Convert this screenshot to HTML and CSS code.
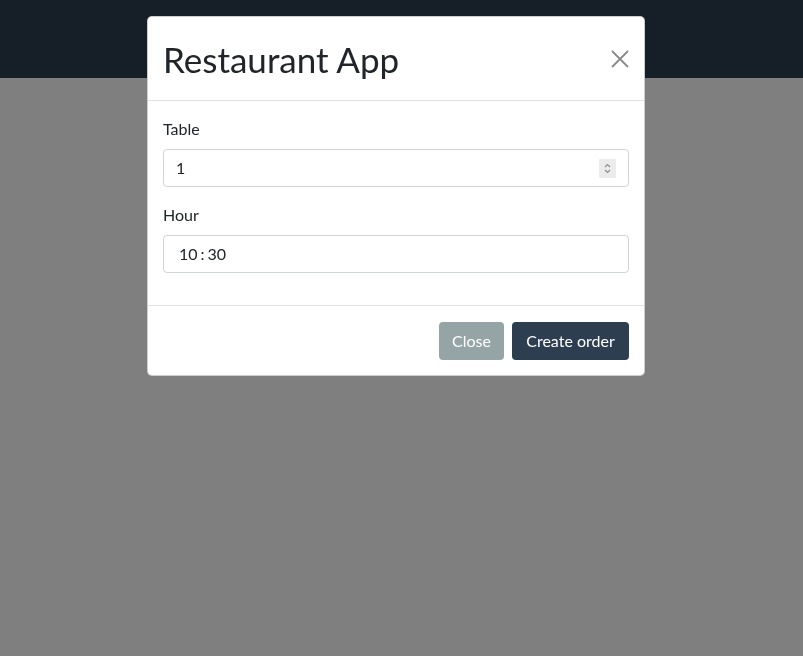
FILE: index.html
```html
<!DOCTYPE html>
<html>
<head>
<meta charset="utf-8">
<link rel="stylesheet" href="styles.css">
</head>
<body>
<div class="navbar"></div>
<div class="backdrop"></div>
<div class="modal">
  <div class="modal-header">
    <h1 class="modal-title">Restaurant App</h1>
    <button class="close" aria-label="Close">
      <svg width="18" height="18" viewBox="0 0 18 18"><path d="M1 1L17 17M17 1L1 17" stroke="#8a8a8a" stroke-width="1.8" fill="none"/></svg>
    </button>
  </div>
  <div class="modal-body">
    <div class="form-group">
      <label class="label">Table</label>
      <div class="input number">
        <span>1</span>
        <span class="spin">
          <svg width="17" height="19" viewBox="0 0 17 19"><path d="M6 8L8.5 5.5L11 8M6 11L8.5 13.5L11 11" stroke="#8c8c8c" stroke-width="1.2" fill="none"/></svg>
        </span>
      </div>
    </div>
    <div class="form-group">
      <label class="label">Hour</label>
      <div class="input time">10<span class="colon">:</span>30</div>
    </div>
  </div>
  <div class="modal-footer">
    <button class="btn btn-secondary">Close</button>
    <button class="btn btn-primary">Create order</button>
  </div>
</div>
</body>
</html>
```
FILE: styles.css
```css
* { box-sizing: border-box; }
html, body { margin: 0; height: 100%; }
body {
  font-family: Lato, "Liberation Sans", sans-serif;
  background: #ffffff;
  color: #212529;
  overflow: hidden;
}
.navbar {
  height: 78px;
  background: #2c3e50;
}
.backdrop {
  position: fixed;
  inset: 0;
  background: rgba(0,0,0,0.5);
}
.modal {
  position: absolute;
  top: 16px;
  left: 147px;
  width: 498px;
  background: #fff;
  border: 1px solid rgba(0,0,0,0.2);
  border-radius: 5px;
}
.modal-header {
  display: flex;
  align-items: center;
  justify-content: space-between;
  padding: 16px 15px 15px 15px;
  height: 84px;
  border-bottom: 1px solid #dee2e6;
}
.modal-title {
  margin: 0;
  font-weight: 400;
  font-size: 35px;
  line-height: 52px;
  color: #212529;
}
.close {
  background: none;
  border: 0;
  padding: 0;
  width: 18px;
  height: 18px;
  display: flex;
}
.modal-body {
  padding: 16px 16px 16px 15px;
}
.form-group {
  margin-bottom: 16px;
}
.label {
  display: block;
  font-size: 16px;
  line-height: 24px;
  margin-bottom: 8px;
  color: #212529;
}
.input {
  display: flex;
  align-items: center;
  width: 466px;
  height: 38px;
  padding: 6px 12px;
  font-size: 16px;
  line-height: 24px;
  color: #212529;
  background: #fff;
  border: 1px solid #ced4da;
  border-radius: 4px;
}
.number {
  justify-content: space-between;
  padding-right: 12px;
}
.spin {
  display: flex;
  width: 17px;
  height: 19px;
  background: #ececec;
  border-radius: 1px;
}
.time {
  padding-left: 15px;
}
.colon {
  margin: 0 3px;
}
.modal-footer {
  display: flex;
  justify-content: flex-end;
  gap: 8px;
  padding: 16px 15px 15px 16px;
  border-top: 1px solid #dee2e6;
}
.btn {
  height: 38px;
  padding: 6px 12px;
  border: 0;
  border-radius: 4px;
  font-family: Lato, "Liberation Sans", sans-serif;
  font-size: 16px;
  line-height: 24px;
  color: #fff;
}
.btn-secondary { background: #95a5a6; width: 65px; }
.btn-primary { background: #2c3e50; width: 117px; }
```
